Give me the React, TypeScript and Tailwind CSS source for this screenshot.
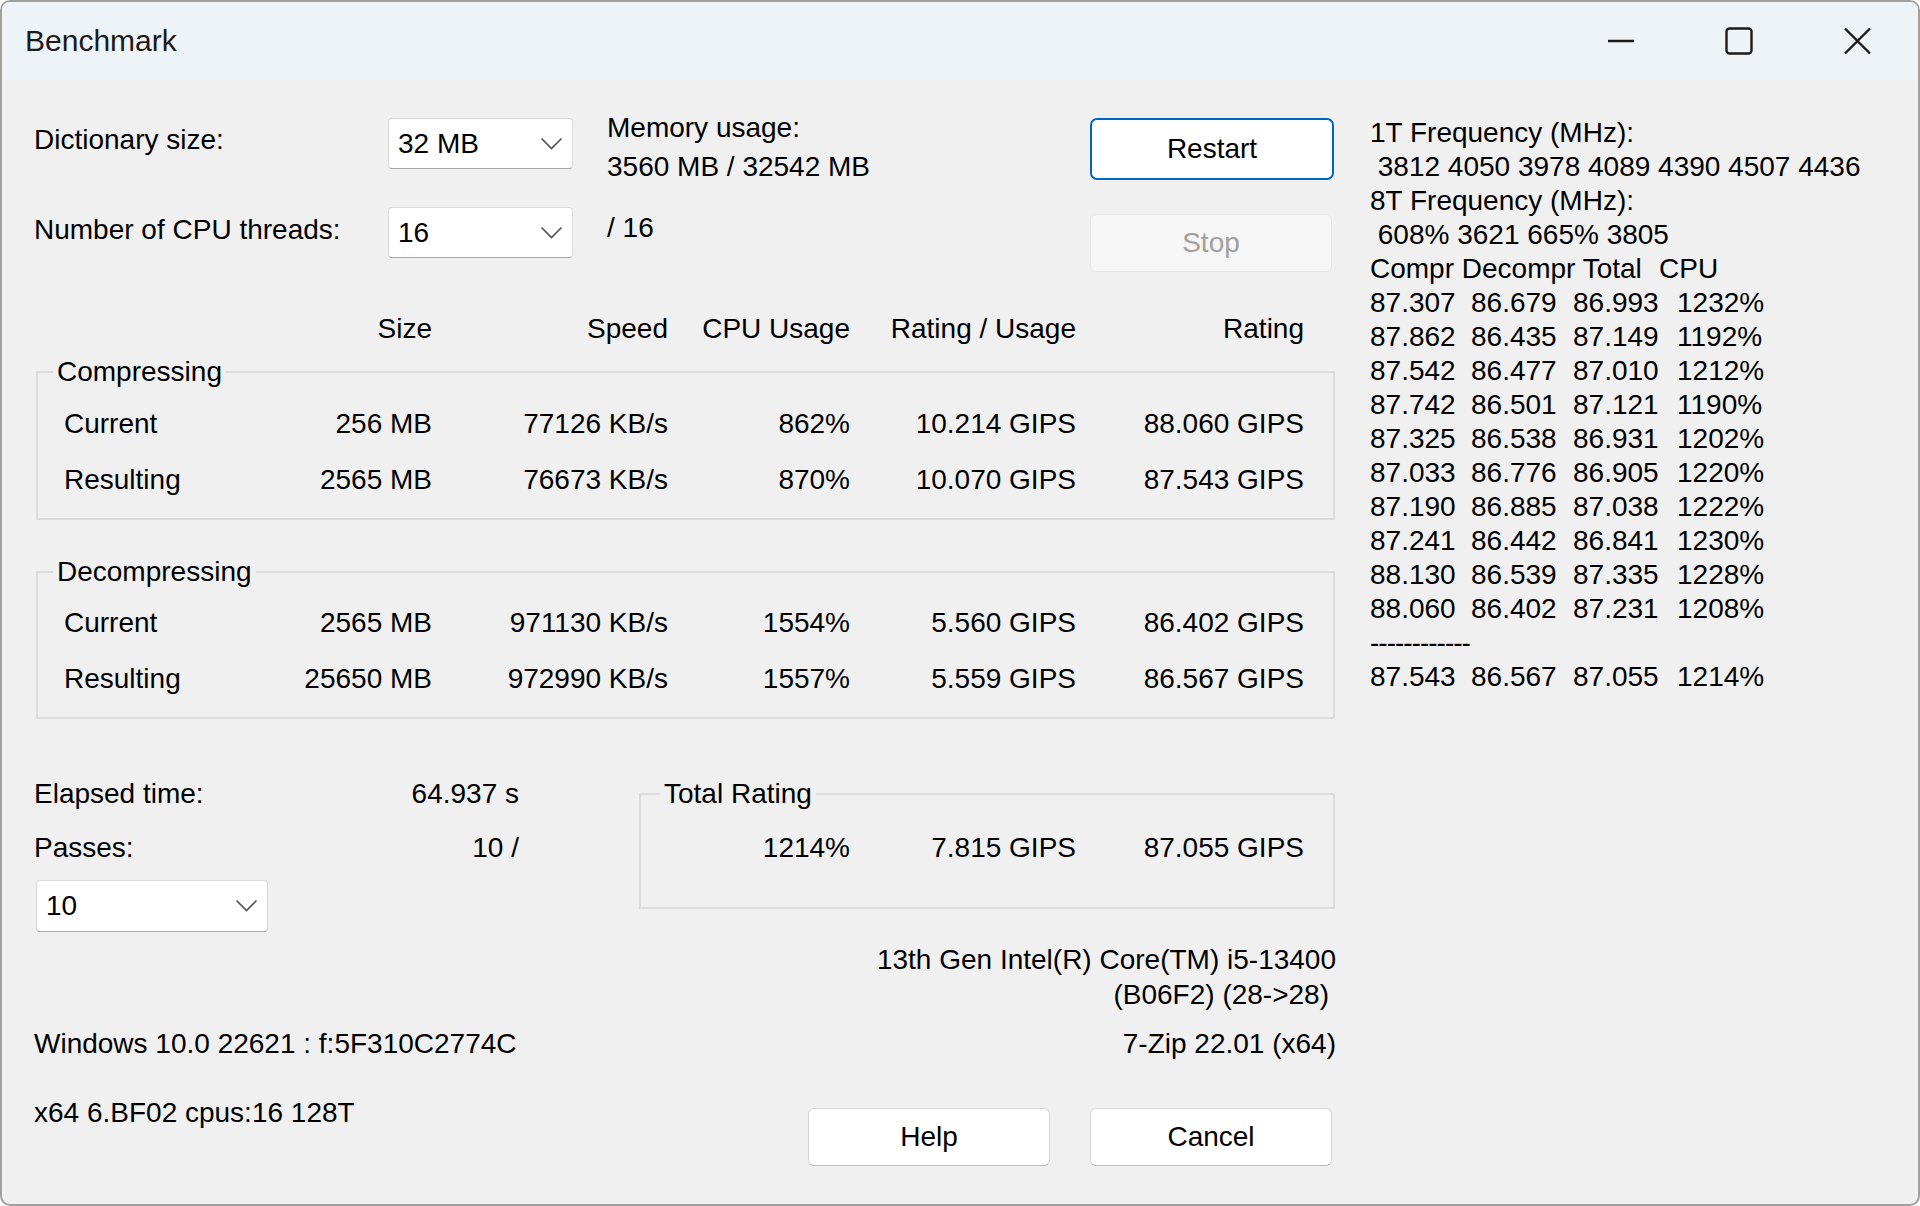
import { ChevronDown } from 'lucide-react'

const COMPRESS = [
  ['Current', '256 MB', '77126 KB/s', '862%', '10.214 GIPS', '88.060 GIPS'],
  ['Resulting', '2565 MB', '76673 KB/s', '870%', '10.070 GIPS', '87.543 GIPS'],
]
const DECOMPRESS = [
  ['Current', '2565 MB', '971130 KB/s', '1554%', '5.560 GIPS', '86.402 GIPS'],
  ['Resulting', '25650 MB', '972990 KB/s', '1557%', '5.559 GIPS', '86.567 GIPS'],
]
const PASSES = [
  ['87.307', '86.679', '86.993', '1232%'],
  ['87.862', '86.435', '87.149', '1192%'],
  ['87.542', '86.477', '87.010', '1212%'],
  ['87.742', '86.501', '87.121', '1190%'],
  ['87.325', '86.538', '86.931', '1202%'],
  ['87.033', '86.776', '86.905', '1220%'],
  ['87.190', '86.885', '87.038', '1222%'],
  ['87.241', '86.442', '86.841', '1230%'],
  ['88.130', '86.539', '87.335', '1228%'],
  ['88.060', '86.402', '87.231', '1208%'],
]

function Combo({ value, className }: { value: string; className: string }) {
  return (
    <div className={`flex items-center justify-between bg-white border border-[#dadada] border-b-[#a8a8a8] rounded-[4px] pl-[9px] pr-[9px] ${className}`}>
      <span>{value}</span>
      <svg width="23" height="14" viewBox="0 0 23 14" fill="none">
        <polyline points="1.5,1.5 11.5,11.5 21.5,1.5" stroke="#555" strokeWidth="1.7" />
      </svg>
    </div>
  )
}

function Group({ title, rows, pad }: { title: string; rows: string[][]; pad: string }) {
  return (
    <fieldset className={`ml-[2px] w-[1299px] border-2 border-[#dcdcdc] ${pad}`}>
      <legend className="ml-[15px] px-[4px] leading-[34px]">{title}</legend>
      <div className="flex flex-col gap-y-[22px]">
        {rows.map(r => (
          <div key={r[0]} className="grid grid-cols-[212px_182px_236px_182px_226px_228px] leading-[34px]">
            <span className="pl-[26px]">{r[0]}</span>
            {r.slice(1).map((v, i) => (
              <span key={i} className="text-right">{v}</span>
            ))}
          </div>
        ))}
      </div>
    </fieldset>
  )
}

export default function App() {
  return (
    <div className="w-[1920px] h-[1206px] bg-[#f0f0f0] border-2 border-[#a0a0a0] rounded-[10px] overflow-hidden text-black text-[28px] leading-[34px] font-['Liberation_Sans',Arial,sans-serif]">
      {/* title bar */}
      <div className="h-[78px] bg-[#eef3f8] flex items-center justify-between">
        <span className="pl-[23px] text-[30px] text-[#1a1a1a]">Benchmark</span>
        <div className="flex h-full mr-[2px]">
          <div className="w-[118px] h-full flex items-center justify-center">
            <svg width="28" height="4" viewBox="0 0 28 4"><line x1="1" y1="2" x2="27" y2="2" stroke="#1a1a1a" strokeWidth="2.4" /></svg>
          </div>
          <div className="w-[118px] h-full flex items-center justify-center">
            <svg width="28" height="28" viewBox="0 0 28 28" fill="none"><rect x="1.5" y="1.5" width="25" height="25" rx="3" stroke="#1a1a1a" strokeWidth="2.4" /></svg>
          </div>
          <div className="w-[118px] h-full flex items-center justify-center">
            <svg width="29" height="28" viewBox="0 0 29 28" fill="none"><path d="M2 1.5 L27 26.5 M27 1.5 L2 26.5" stroke="#1a1a1a" strokeWidth="2.4" /></svg>
          </div>
        </div>
      </div>

      <div className="flex">
        {/* left part */}
        <div className="ml-[32px] w-[1302px]">
          {/* settings */}
          <div className="h-[232px] flex">
            <div className="w-[354px]">
              <div className="mt-[43px]">Dictionary size:</div>
              <div className="mt-[56px]">Number of CPU threads:</div>
            </div>
            <div className="w-[185px]">
              <Combo value="32 MB" className="mt-[38px] h-[51px]" />
              <Combo value="16" className="mt-[38px] h-[51px]" />
            </div>
            <div className="ml-[34px] w-[483px]">
              <div className="mt-[28px] leading-[39px]">
                <div>Memory usage:</div>
                <div>3560 MB / 32542 MB</div>
              </div>
              <div className="mt-[25px]">/ 16</div>
            </div>
            <div className="w-[244px]">
              <button className="mt-[38px] w-[244px] h-[62px] bg-white border-2 border-[#0067c0] rounded-[7px]">Restart</button>
              <button className="mt-[34px] w-[242px] h-[58px] bg-[#f6f6f6] border border-[#e6e6e6] rounded-[6px] text-[#a0a0a0]">Stop</button>
            </div>
          </div>

          {/* column headers */}
          <div className="grid grid-cols-[216px_182px_236px_182px_226px_228px] h-[34px]">
            <span />
            <span className="text-right">Size</span>
            <span className="text-right">Speed</span>
            <span className="text-right">CPU Usage</span>
            <span className="text-right">Rating / Usage</span>
            <span className="text-right">Rating</span>
          </div>

          <div className="mt-[9px]">
            <Group title="Compressing" rows={COMPRESS} pad="pt-[18px] pb-[21px]" />
          </div>
          <div className="mt-[35px]">
            <Group title="Decompressing" rows={DECOMPRESS} pad="pt-[17px] pb-[21px]" />
          </div>

          {/* totals */}
          <div className="mt-[58px] flex items-start">
            <div className="w-[485px]">
              <div className="flex justify-between">
                <span>Elapsed time:</span>
                <span>64.937 s</span>
              </div>
              <div className="mt-[20px] flex justify-between">
                <span>Passes:</span>
                <span>10 /</span>
              </div>
              <Combo value="10" className="mt-[15px] ml-[2px] w-[232px] h-[52px]" />
            </div>
            <fieldset className="ml-[120px] w-[696px] border-2 border-[#dcdcdc] pt-[20px] pb-[42px]">
              <legend className="ml-[19px] px-[4px] leading-[34px]">Total Rating</legend>
              <div className="grid grid-cols-[209px_226px_228px]">
                <span className="text-right">1214%</span>
                <span className="text-right">7.815 GIPS</span>
                <span className="text-right">87.055 GIPS</span>
              </div>
            </fieldset>
          </div>

          <div className="mt-[10px] text-right leading-[35px]">
            <div>13th Gen Intel(R) Core(TM) i5-13400</div>
            <div className="pr-[7px]">(B06F2) (28-&gt;28)</div>
          </div>
          <div className="mt-[15px] flex justify-between">
            <span>Windows 10.0 22621 : f:5F310C2774C</span>
            <span>7-Zip 22.01 (x64)</span>
          </div>
          <div className="flex justify-between items-start">
            <span className="mt-[35px]">x64 6.BF02 cpus:16 128T</span>
            <div className="mt-[47px] mr-[4px] flex gap-[40px]">
              <button className="w-[242px] h-[58px] bg-white border border-[#d6d6d6] border-b-[#bcbcbc] rounded-[6px]">Help</button>
              <button className="w-[242px] h-[58px] bg-white border border-[#d6d6d6] border-b-[#bcbcbc] rounded-[6px]">Cancel</button>
            </div>
          </div>
        </div>

        {/* pass log */}
        <div className="ml-[34px] pt-[36px] whitespace-pre">
          <div>1T Frequency (MHz):</div>
          <div> 3812 4050 3978 4089 4390 4507 4436</div>
          <div>8T Frequency (MHz):</div>
          <div> 608% 3621 665% 3805</div>
          <div className="grid grid-cols-[289px_auto]">
            <span>Compr Decompr Total</span>
            <span>CPU</span>
          </div>
          {PASSES.map((r, i) => (
            <div key={i} className="grid grid-cols-[101px_102px_104px_auto]">
              {r.map((v, j) => <span key={j}>{v}</span>)}
            </div>
          ))}
          <div className="tracking-[-1px]">------------</div>
          <div className="grid grid-cols-[101px_102px_104px_auto]">
            {['87.543', '86.567', '87.055', '1214%'].map((v, j) => <span key={j}>{v}</span>)}
          </div>
        </div>
      </div>
    </div>
  )
}
